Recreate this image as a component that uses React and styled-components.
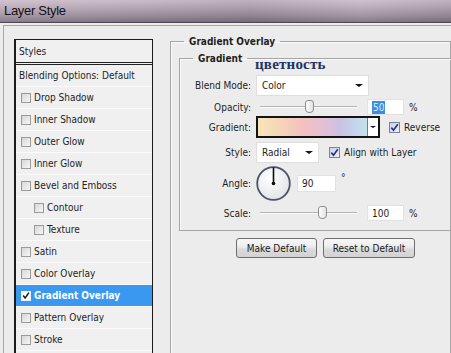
import React from 'react'
import styled, { createGlobalStyle } from 'styled-components'

const UI = `"DejaVu Sans Condensed", "DejaVu Sans", "Liberation Sans", sans-serif`

const GlobalStyle = createGlobalStyle`
  html, body { margin: 0; padding: 0; background: #ececec; }
  body { font-family: ${UI}; font-stretch: condensed; font-size: 10px; color: #1e1e1e; }
`

const styleItems = [
  { label: 'Drop Shadow' },
  { label: 'Inner Shadow' },
  { label: 'Outer Glow' },
  { label: 'Inner Glow' },
  { label: 'Bevel and Emboss' },
  { label: 'Contour', indent: true },
  { label: 'Texture', indent: true },
  { label: 'Satin' },
  { label: 'Color Overlay' },
  { label: 'Gradient Overlay', checked: true, selected: true },
  { label: 'Pattern Overlay' },
  { label: 'Stroke' },
]

const Window = styled.div`
  width: 451px;
  height: 353px;
  overflow: hidden;
  display: flex;
  flex-direction: column;
  background: #ececec;
`

const TitleBar = styled.div`
  flex: none;
  height: 23px;
  box-sizing: border-box;
  padding: 0 0 2px 4px;
  display: flex;
  align-items: center;
  border-bottom: 1px solid #4f4554;
  background:
    linear-gradient(90deg, rgba(255,255,255,0.10) 0%, rgba(0,0,0,0) 30%, rgba(0,0,0,0.06) 55%, rgba(255,255,255,0.08) 80%, rgba(0,0,0,0.05) 100%),
    linear-gradient(180deg, #cbbcca 0%, #b6a6b5 35%, #978998 75%, #7b6e7e 100%);
  font: 13px "Liberation Sans", Arial, sans-serif;
  letter-spacing: -0.3px;
  color: #141014;
`

const Frame = styled.div`
  flex: 1;
  min-height: 0;
  margin: 2px 0 0 3px;
  border-left: 1px solid #a8a8a8;
  border-top: 1px solid #a8a8a8;
  display: flex;
  align-items: flex-start;
  padding: 9px 0 0 10px;
`

const StyleList = styled.div`
  flex: none;
  width: 139px;
  height: 340px;
  margin-top: 4px;
  box-sizing: border-box;
  border: 1px solid #1c1c1c;
  border-left-width: 2px;
  background: #f0f0f0;
`

const ListHeader = styled.div`
  height: 22px;
  display: flex;
  align-items: center;
  padding-left: 3px;
  border-bottom: 3px double #222;
`

const ListRow = styled.div`
  height: 21px;
  display: flex;
  align-items: center;
  gap: 3px;
  padding-left: ${p => p.$pad}px;
  border-bottom: 1px solid #fbfbfb;
  background: ${p => (p.$selected ? '#3a98f0' : 'transparent')};
  color: ${p => (p.$selected ? '#fff' : '#1e1e1e')};
  font-weight: ${p => (p.$selected ? 'bold' : 'normal')};
`

const Box = styled.span`
  flex: none;
  width: ${p => p.$size}px;
  height: ${p => p.$size}px;
  box-sizing: border-box;
  display: inline-flex;
  align-items: center;
  justify-content: center;
  border: 1px solid ${p => (p.$tone === 'blue' ? '#7c8296' : p.$tone === 'white' ? '#e8f2ff' : '#9a9a9a')};
  background: ${p =>
    p.$tone === 'blue'
      ? 'linear-gradient(135deg, #c9d2e6, #eef1f8)'
      : p.$tone === 'white'
      ? '#ffffff'
      : 'linear-gradient(135deg, #d6d6d6, #f7f7f7)'};
`

const Check = ({ color }) => (
  <svg width="9" height="9" viewBox="0 0 9 9">
    <path d="M1.3 4.6 L3.5 7.2 L7.8 1.2" fill="none" stroke={color} strokeWidth="1.7" />
  </svg>
)

const CheckBox = ({ checked, size = 10, tone = 'gray', color = '#222' }) => (
  <Box $size={size} $tone={tone}>{checked && <Check color={color} />}</Box>
)

const Group = styled.fieldset`
  margin: ${p => p.$margin};
  padding: 0 0 ${p => p.$bottom}px 0;
  width: ${p => p.$width}px;
  min-width: 0;
  box-sizing: border-box;
  border: 1px solid #a5a5a5;
  box-shadow: inset 1px 1px 0 #fafafa;
`

const Legend = styled.legend`
  margin-left: 13px;
  padding: 0 5px;
  font-weight: bold;
  font-size: 10px;
  line-height: 13px;
  color: #1e1e1e;
`

const Note = styled.div`
  height: 10px;
  margin: -6px 0 0 75px;
  font: bold 15px "Liberation Serif", "Times New Roman", serif;
  line-height: 10px;
  color: #1d3464;
  letter-spacing: 0.2px;
`

const Row = styled.div`
  display: flex;
  align-items: center;
  height: ${p => p.$h}px;
  margin-top: ${p => p.$mt}px;
`

const Label = styled.span`
  flex: none;
  width: 71px;
  margin-right: 5px;
  text-align: right;
`

const Select = styled.div`
  flex: none;
  width: ${p => p.$w}px;
  height: 21px;
  box-sizing: border-box;
  display: flex;
  align-items: center;
  justify-content: space-between;
  padding: 0 5px 0 5px;
  background: #fff;
  border: 1px solid #dedede;
`

const Arrow = styled.span`
  width: 0;
  height: 0;
  border-left: ${p => p.$s}px solid transparent;
  border-right: ${p => p.$s}px solid transparent;
  border-top: ${p => p.$s - 0.5}px solid #111;
`

const Slider = styled.div`
  position: relative;
  flex: none;
  width: 97px;
  height: 16px;
  margin-left: 4px;
  &::before {
    content: '';
    position: absolute;
    left: 0;
    right: 0;
    top: 7px;
    height: 1px;
    background: #b4b4b4;
    box-shadow: 0 1px 0 #fbfbfb;
  }
`

const Thumb = styled.span`
  position: absolute;
  top: 1px;
  width: 9px;
  height: 13px;
  margin-left: -4px;
  box-sizing: border-box;
  border: 1px solid #8d8d8d;
  border-radius: 3px 3px 4px 4px;
  background: linear-gradient(90deg, #fdfdfd, #e2e2e2);
`

const Field = styled.div`
  flex: none;
  width: ${p => p.$w}px;
  height: ${p => p.$h || 16}px;
  margin-left: ${p => p.$ml}px;
  box-sizing: border-box;
  display: flex;
  align-items: center;
  padding-left: 4px;
  background: #fff;
  border: 1px solid #e2e2e2;
`

const Selected = styled.span`
  background: #3b8fe2;
  color: #d8ecff;
  padding: 1px 1px;
`

const Unit = styled.span`
  margin-left: 5px;
  align-self: ${p => (p.$raised ? 'flex-start' : 'center')};
  margin-top: ${p => (p.$raised ? 6 : 0)}px;
`

const GradientBox = styled.div`
  flex: none;
  width: 124px;
  height: 22px;
  box-sizing: border-box;
  display: flex;
  border: 2px solid #141414;
`

const GradientFill = styled.div`
  flex: 1;
  background: linear-gradient(90deg, #f7e6b9 0%, #f5d3b8 22%, #f3c0bf 42%, #e6c0d2 58%, #cbc1e2 75%, #c2d3ea 88%, #c6e2ee 100%);
`

const GradientDrop = styled.div`
  flex: none;
  width: 10px;
  display: flex;
  align-items: center;
  justify-content: center;
  background: #fff;
  border-left: 1px solid #7a7a7a;
`

const Option = styled.label`
  display: flex;
  align-items: center;
  gap: 4px;
  margin-left: ${p => p.$ml}px;
`

const Dial = styled.div`
  flex: none;
  width: 35px;
  height: 35px;
  display: flex;
`

const ButtonBar = styled.div`
  display: flex;
  gap: 6px;
  margin: 7px 0 0 65px;
`

const Button = styled.button`
  width: ${p => p.$w}px;
  height: 20px;
  padding: 0;
  font-family: ${UI};
  font-stretch: condensed;
  font-size: 10px;
  color: #1a1a1a;
  border: 1px solid #6f6f6f;
  border-radius: 3px;
  background: linear-gradient(180deg, #f7f7f7 0%, #ececec 45%, #dcdcdc 55%, #d2d2d2 100%);
`

const PercentSlider = ({ value, min = 0, max = 100 }) => (
  <Slider>
    <Thumb style={{ left: `${((value - min) / (max - min)) * 100}%` }} />
  </Slider>
)

export default function App() {
  return (
    <>
      <GlobalStyle />
      <Window>
        <TitleBar>Layer Style</TitleBar>
        <Frame>
          <StyleList>
            <ListHeader>Styles</ListHeader>
            <ListRow $pad={3}>Blending Options: Default</ListRow>
            {styleItems.map(item => (
              <ListRow key={item.label} $pad={item.indent ? 18 : 5} $selected={item.selected}>
                <CheckBox checked={item.checked} tone={item.selected ? 'white' : 'gray'} color="#1a1a1a" />
                {item.label}
              </ListRow>
            ))}
          </StyleList>

          <Group $margin="0 0 0 17px" $width={320} $bottom={120}>
            <Legend>Gradient Overlay</Legend>
            <Group $margin="4px 0 0 8px" $width={300} $bottom={9}>
              <Legend>Gradient</Legend>
              <Note>цветность</Note>
              <Row $h={21} $mt={6}>
                <Label>Blend Mode:</Label>
                <Select $w={113}>
                  <span>Color</span>
                  <Arrow $s={4} />
                </Select>
              </Row>
              <Row $h={16} $mt={3}>
                <Label>Opacity:</Label>
                <PercentSlider value={50} />
                <Field $w={37} $ml={10}>
                  <Selected>50</Selected>
                </Field>
                <Unit>%</Unit>
              </Row>
              <Row $h={22} $mt={1}>
                <Label>Gradient:</Label>
                <GradientBox>
                  <GradientFill />
                  <GradientDrop>
                    <Arrow $s={3} />
                  </GradientDrop>
                </GradientBox>
                <Option $ml={9}>
                  <CheckBox checked size={11} tone="blue" color="#26338a" />
                  Reverse
                </Option>
              </Row>
              <Row $h={21} $mt={4}>
                <Label>Style:</Label>
                <Select $w={63}>
                  <span>Radial</span>
                  <Arrow $s={4} />
                </Select>
                <Option $ml={10}>
                  <CheckBox checked size={11} tone="blue" color="#26338a" />
                  Align with Layer
                </Option>
              </Row>
              <Row $h={35} $mt={3}>
                <Label>Angle:</Label>
                <Dial>
                  <svg width="35" height="35" viewBox="0 0 35 35">
                    <defs>
                      <radialGradient id="dialFill" cx="40%" cy="35%" r="70%">
                        <stop offset="0" stopColor="#ffffff" />
                        <stop offset="1" stopColor="#e1e3e8" />
                      </radialGradient>
                    </defs>
                    <circle cx="17.5" cy="17.5" r="16.3" fill="url(#dialFill)" stroke="#4d5366" strokeWidth="1.8" />
                    <line x1="17.5" y1="17.5" x2="17.5" y2="1.5" stroke="#0d0d0d" strokeWidth="1.6" />
                    <circle cx="17.5" cy="17.5" r="1.8" fill="#0d0d0d" />
                  </svg>
                </Dial>
                <Field $w={39} $h={17} $ml={6}>90</Field>
                <Unit $raised>°</Unit>
              </Row>
              <Row $h={16} $mt={4}>
                <Label>Scale:</Label>
                <PercentSlider value={100} min={10} max={150} />
                <Field $w={37} $ml={10}>100</Field>
                <Unit>%</Unit>
              </Row>
            </Group>
            <ButtonBar>
              <Button $w={81}>Make Default</Button>
              <Button $w={92}>Reset to Default</Button>
            </ButtonBar>
          </Group>
        </Frame>
      </Window>
    </>
  )
}
